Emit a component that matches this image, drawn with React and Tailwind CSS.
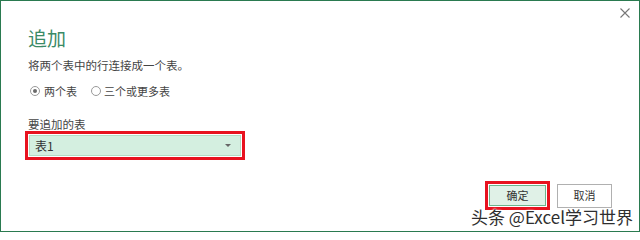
import React from "react";

const font = { fontFamily: '"Microsoft YaHei", "Noto Sans CJK SC", "Noto Sans", sans-serif' };

function Radio({ checked }) {
  return (
    <span className="w-[10px] h-[10px] rounded-full border border-[#9a9a9a] bg-white flex items-center justify-center">
      {checked && <span className="w-[4px] h-[4px] rounded-full bg-[#6a6a6a]" />}
    </span>
  );
}

export default function App() {
  return (
    <div
      className="relative w-[640px] h-[232px] bg-white border border-[#2a7a50] flex flex-col text-[#444] overflow-hidden"
      style={font}
    >
      <svg className="absolute left-[619px] top-[7px]" width="10" height="10" viewBox="0 0 10 10">
        <path d="M0.5 0.5 L9.5 9.5 M9.5 0.5 L0.5 9.5" stroke="#777" strokeWidth="1.1" />
      </svg>

      <div className="flex flex-col pl-[27px] pt-[26px]">
        <div className="text-[19px] leading-[22px] text-[#3a8a66]">追加</div>
        <div className="mt-[9px] text-[11.5px] leading-[14px] text-[#444]">将两个表中的行连接成一个表。</div>
        <div className="mt-[12px] flex items-center text-[11px] leading-[14px]">
          <div className="flex items-center gap-[4px] pl-[2px]">
            <Radio checked />
            <span>两个表</span>
          </div>
          <div className="flex items-center gap-[3px] ml-[14px]">
            <Radio />
            <span>三个或更多表</span>
          </div>
        </div>
        <div className="mt-[19px] text-[11.5px] leading-[14px]">要追加的表</div>
        <div className="-ml-[3px] w-[220px] h-[29px] border-[3px] border-[#e8121f] p-[1px]">
          <div className="h-full w-full bg-[#d4efe0] border border-[#b4dcc4] flex items-center justify-between pl-[5px] pr-[9px] text-[12px]">
            <span className="text-[#333]">表1</span>
            <svg width="6" height="3" viewBox="0 0 6 3">
              <path d="M0 0 L6 0 L3 3 Z" fill="#666" />
            </svg>
          </div>
        </div>
      </div>

      <div className="flex justify-end items-center gap-[7px] mt-[21px] pr-[27px]">
        <div className="w-[65px] h-[29px] border-[3px] border-[#e8121f] p-[1px]">
          <div className="w-full h-full border border-[#6db48c] bg-[#e0f1e7] flex items-center justify-center text-[11px] text-[#333]">
            确定
          </div>
        </div>
        <div className="w-[55px] h-[24px] border border-[#b0b0b0] bg-white flex items-center justify-center text-[11px] text-[#333]">
          取消
        </div>
      </div>

      <div
        className="absolute left-[470px] top-[206px] text-[17px] leading-[20px] text-[#2f2f2f] whitespace-nowrap"
        style={{ textShadow: "0 0 2px #fff, 0 0 2px #fff, 0 0 3px #fff" }}
      >
        头条 @Excel学习世界
      </div>
    </div>
  );
}
